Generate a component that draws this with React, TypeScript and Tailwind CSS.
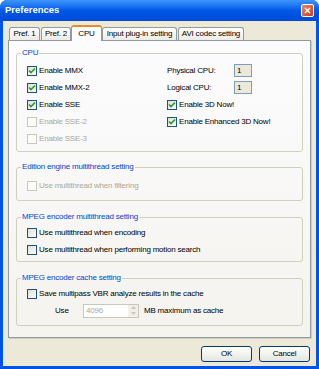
import React from 'react';

function Check({ checked = false, disabled = false }: { checked?: boolean; disabled?: boolean }) {
  return (
    <span
      className={`relative flex h-[10px] w-[10px] shrink-0 items-center justify-center border ${
        disabled ? 'border-[#cac8bb] bg-[#fbfbf8]' : 'border-[#1c5180] bg-gradient-to-br from-[#dcdcd7] to-white'
      }`}
    >
      {checked && (
        <svg width="8" height="8" viewBox="0 0 8 8">
          <path d="M1 3.5 L3 5.5 L7 1.5" fill="none" stroke="#21a121" strokeWidth="1.6" />
        </svg>
      )}
    </span>
  );
}

function Row({ label, checked, disabled }: { label: string; checked?: boolean; disabled?: boolean }) {
  return (
    <div className="flex h-[17px] items-center gap-[2px]">
      <Check checked={checked} disabled={disabled} />
      <span className={disabled ? 'text-[#aca899]' : 'text-black'}>{label}</span>
    </div>
  );
}

function Group({ title, className, children }: { title: string; className: string; children: React.ReactNode }) {
  return (
    <fieldset className={`rounded-[3px] border border-[#d0d0bf] ${className}`}>
      <legend className="ml-[4px] px-[1px] leading-[10px] text-[#0046d5]">{title}</legend>
      {children}
    </fieldset>
  );
}

function Tab({ label, w, active, className = '' }: { label: string; w: string; active?: boolean; className?: string }) {
  if (active) {
    return (
      <div
        className={`relative z-10 -mb-px flex h-[16px] items-center justify-center rounded-t-[3px] border-x border-[#919b9c] border-t-[2px] border-t-[#e68b2c] bg-[#fcfcfe] ${w} ${className}`}
      >
        {label}
      </div>
    );
  }
  return (
    <div
      className={`flex h-[13px] items-center justify-center rounded-t-[3px] border-x border-t border-[#919b9c] bg-gradient-to-b from-white to-[#ecebe6] ${w} ${className}`}
    >
      {label}
    </div>
  );
}

function Button({ label }: { label: string }) {
  return (
    <div className="flex h-[16px] w-[51px] items-center justify-center rounded-[3px] border border-[#003c74] bg-gradient-to-b from-white to-[#e6e5de] text-black">
      {label}
    </div>
  );
}

export default function App() {
  return (
    <div className="flex h-[369px] w-[319px] flex-col rounded-t-[7px] bg-[#0054e3] font-['Liberation_Sans',Arial,sans-serif] text-[8px] tracking-[-0.2px] text-black">
      <div className="flex h-[21px] items-center justify-between rounded-t-[7px] bg-gradient-to-b from-[#3d95ff] via-[#0058e6] to-[#0049d9] pl-[5px] pr-[5px]">
        <span className="text-[9.5px] font-bold tracking-normal text-white">Preferences</span>
        <div className="flex h-[13px] w-[13px] items-center justify-center rounded-[2px] border border-white bg-gradient-to-br from-[#e8866a] to-[#c53a16]">
          <svg width="7" height="7" viewBox="0 0 7 7">
            <path d="M1 1 L6 6 M6 1 L1 6" stroke="white" strokeWidth="1.4" />
          </svg>
        </div>
      </div>

      <div className="mx-[3px] mb-[3px] flex flex-1 flex-col bg-[#ece9d8] px-[5px] pt-[4px]">
        <div className="flex h-[15px] items-end">
          <Tab label="Pref. 1" w="w-[31px]" className="ml-[1px]" />
          <Tab label="Pref. 2" w="w-[30px]" className="ml-[1px]" />
          <Tab label="CPU" w="w-[31px]" active />
          <Tab label="Input plug-in setting" w="w-[75px]" />
          <Tab label="AVI codec setting" w="w-[66px]" className="ml-[1px]" />
        </div>

        <div className="h-[298px] border border-[#919b9c] bg-gradient-to-b from-[#fcfcfe] to-[#f4f3ee] px-[7px] pt-[7px] shadow-[1px_1px_0_#d0cebf]">
          <Group title="CPU" className="pb-[4px]">
            <div className="grid grid-cols-[140px_1fr] pl-[10px] pt-[4px]">
              <div className="flex flex-col">
                <Row label="Enable MMX" checked />
                <Row label="Enable MMX-2" checked />
                <Row label="Enable SSE" checked />
                <Row label="Enable SSE-2" disabled />
                <Row label="Enable SSE-3" disabled />
              </div>
              <div className="flex flex-col">
                <div className="flex h-[17px] items-center">
                  <span className="w-[67px]">Physical CPU:</span>
                  <span className="flex h-[13px] w-[18px] items-center border border-[#7f9db9] bg-[#ece9d8] pl-[2px]">1</span>
                </div>
                <div className="flex h-[17px] items-center">
                  <span className="w-[67px]">Logical CPU:</span>
                  <span className="flex h-[13px] w-[18px] items-center border border-[#7f9db9] bg-[#ece9d8] pl-[2px]">1</span>
                </div>
                <Row label="Enable 3D Now!" checked />
                <Row label="Enable Enhanced 3D Now!" checked />
              </div>
            </div>
          </Group>

          <Group title="Edition engine multithread setting" className="mt-[10px] pb-[6px]">
            <div className="pl-[10px] pt-[5px]">
              <Row label="Use multithread when filtering" disabled />
            </div>
          </Group>

          <Group title="MPEG encoder multithread setting" className="mt-[11px] pb-[3px]">
            <div className="pl-[10px] pt-[2px]">
              <Row label="Use multithread when encoding" />
              <Row label="Use multithread when performing motion search" />
            </div>
          </Group>

          <Group title="MPEG encoder cache setting" className="mt-[11px] pb-[6px]">
            <div className="pl-[10px] pt-[2px]">
              <Row label="Save multipass VBR analyze results in the cache" />
              <div className="flex h-[17px] items-center">
                <span className="ml-[28px] w-[28px]">Use</span>
                <div className="flex h-[14px] w-[56px] items-stretch border border-[#c9c7ba] bg-white">
                  <span className="flex flex-1 items-center pl-[2px] text-[#aca899]">4096</span>
                  <div className="flex w-[10px] flex-col">
                    <div className="flex flex-1 items-center justify-center bg-[#f0efe8]">
                      <svg width="5" height="3" viewBox="0 0 5 3"><path d="M0 3 L2.5 0 L5 3Z" fill="#c9c7ba" /></svg>
                    </div>
                    <div className="flex flex-1 items-center justify-center bg-[#f0efe8]">
                      <svg width="5" height="3" viewBox="0 0 5 3"><path d="M0 0 L2.5 3 L5 0Z" fill="#c9c7ba" /></svg>
                    </div>
                  </div>
                </div>
                <span className="ml-[5px]">MB maximum as cache</span>
              </div>
            </div>
          </Group>
        </div>

        <div className="mt-[8px] flex justify-end gap-[7px] pr-[1px]">
          <Button label="OK" />
          <Button label="Cancel" />
        </div>
      </div>
    </div>
  );
}
